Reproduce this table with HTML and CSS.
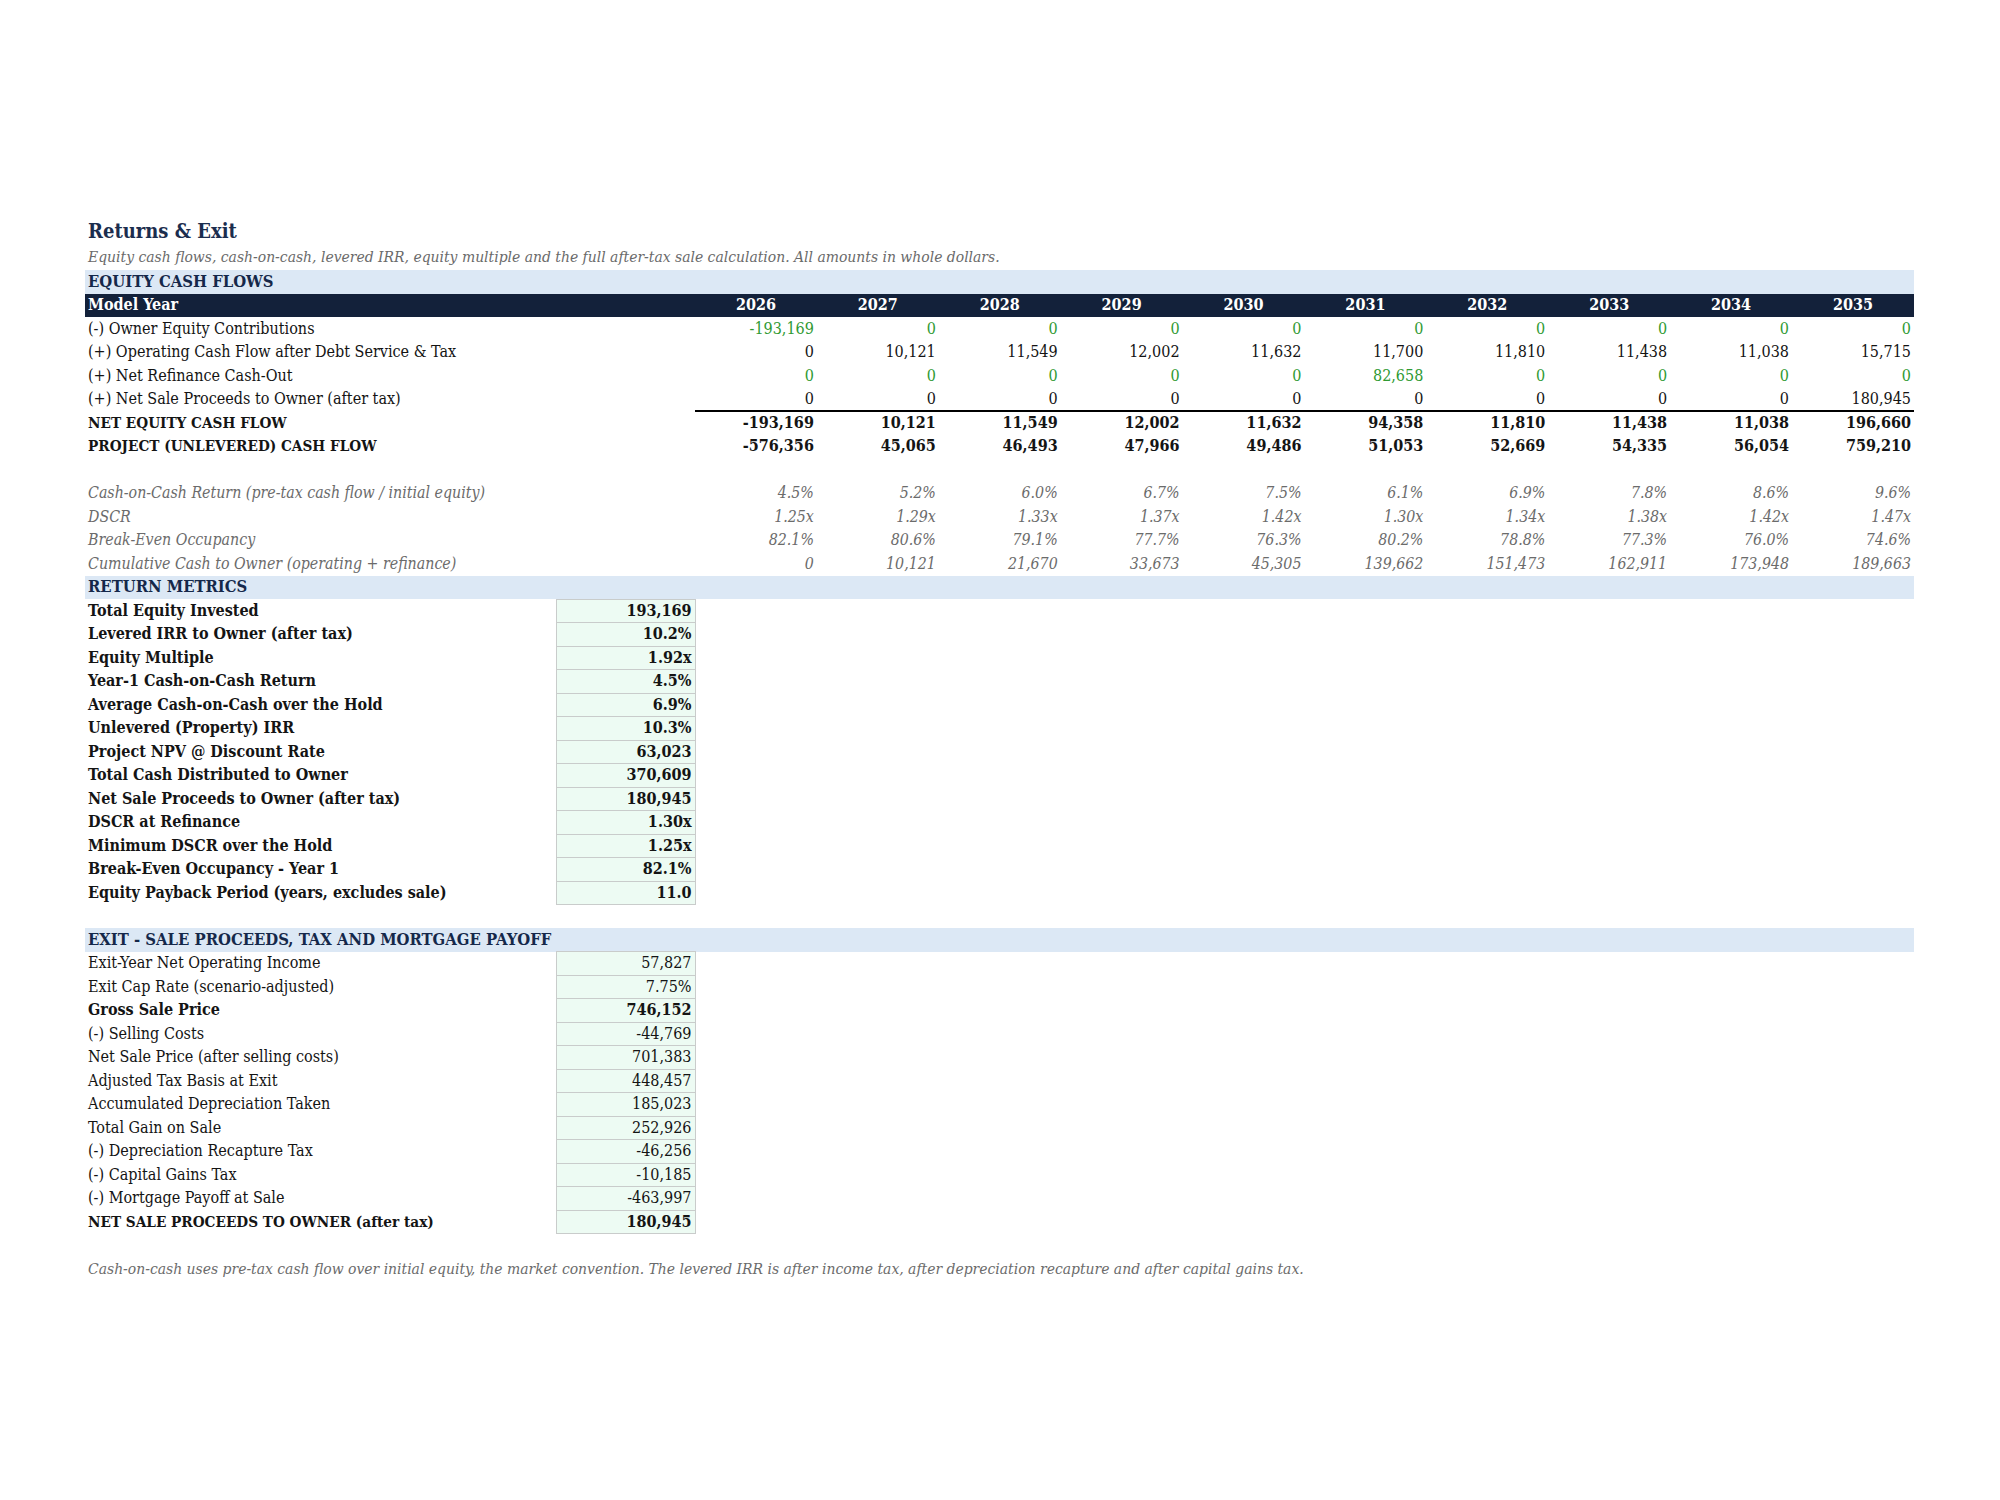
FILE: index.html
```html
<!DOCTYPE html>
<html lang="en">
<head>
<meta charset="utf-8">
<title>Returns &amp; Exit</title>
<link rel="stylesheet" href="styles.css">
</head>
<body>
<div class="sheet">
  <div class="title">Returns &amp; Exit</div>
  <div class="subtitle">Equity cash flows, cash-on-cash, levered IRR, equity multiple and the full after-tax sale calculation. All amounts in whole dollars.</div>
  <table class="grid">
    <colgroup>
      <col class="c-label"><col class="c-val">
      <col class="c-yr"><col class="c-yr"><col class="c-yr"><col class="c-yr"><col class="c-yr">
      <col class="c-yr"><col class="c-yr"><col class="c-yr"><col class="c-yr"><col class="c-yr">
    </colgroup>
    <tbody>
      <tr class="band"><td colspan="12">EQUITY CASH FLOWS</td></tr>
      <tr class="head"><td colspan="2">Model Year</td><td>2026</td><td>2027</td><td>2028</td><td>2029</td><td>2030</td><td>2031</td><td>2032</td><td>2033</td><td>2034</td><td>2035</td></tr>
      <tr class="row"><td colspan="2" class="lbl">(-) Owner Equity Contributions</td><td class="num green">-193,169</td><td class="num green">0</td><td class="num green">0</td><td class="num green">0</td><td class="num green">0</td><td class="num green">0</td><td class="num green">0</td><td class="num green">0</td><td class="num green">0</td><td class="num green">0</td></tr>
      <tr class="row"><td colspan="2" class="lbl">(+) Operating Cash Flow after Debt Service &amp; Tax</td><td class="num">0</td><td class="num">10,121</td><td class="num">11,549</td><td class="num">12,002</td><td class="num">11,632</td><td class="num">11,700</td><td class="num">11,810</td><td class="num">11,438</td><td class="num">11,038</td><td class="num">15,715</td></tr>
      <tr class="row"><td colspan="2" class="lbl">(+) Net Refinance Cash-Out</td><td class="num green">0</td><td class="num green">0</td><td class="num green">0</td><td class="num green">0</td><td class="num green">0</td><td class="num green">82,658</td><td class="num green">0</td><td class="num green">0</td><td class="num green">0</td><td class="num green">0</td></tr>
      <tr class="row"><td colspan="2" class="lbl">(+) Net Sale Proceeds to Owner (after tax)</td><td class="num">0</td><td class="num">0</td><td class="num">0</td><td class="num">0</td><td class="num">0</td><td class="num">0</td><td class="num">0</td><td class="num">0</td><td class="num">0</td><td class="num">180,945</td></tr>
      <tr class="row bold total"><td colspan="2" class="lbl caps">NET EQUITY CASH FLOW</td><td class="num">-193,169</td><td class="num">10,121</td><td class="num">11,549</td><td class="num">12,002</td><td class="num">11,632</td><td class="num">94,358</td><td class="num">11,810</td><td class="num">11,438</td><td class="num">11,038</td><td class="num">196,660</td></tr>
      <tr class="row bold"><td colspan="2" class="lbl caps">PROJECT (UNLEVERED) CASH FLOW</td><td class="num">-576,356</td><td class="num">45,065</td><td class="num">46,493</td><td class="num">47,966</td><td class="num">49,486</td><td class="num">51,053</td><td class="num">52,669</td><td class="num">54,335</td><td class="num">56,054</td><td class="num">759,210</td></tr>
      <tr class="row"><td colspan="12"></td></tr>
      <tr class="row ital"><td colspan="2" class="lbl">Cash-on-Cash Return (pre-tax cash flow / initial equity)</td><td class="num">4.5%</td><td class="num">5.2%</td><td class="num">6.0%</td><td class="num">6.7%</td><td class="num">7.5%</td><td class="num">6.1%</td><td class="num">6.9%</td><td class="num">7.8%</td><td class="num">8.6%</td><td class="num">9.6%</td></tr>
      <tr class="row ital"><td colspan="2" class="lbl">DSCR</td><td class="num">1.25x</td><td class="num">1.29x</td><td class="num">1.33x</td><td class="num">1.37x</td><td class="num">1.42x</td><td class="num">1.30x</td><td class="num">1.34x</td><td class="num">1.38x</td><td class="num">1.42x</td><td class="num">1.47x</td></tr>
      <tr class="row ital"><td colspan="2" class="lbl">Break-Even Occupancy</td><td class="num">82.1%</td><td class="num">80.6%</td><td class="num">79.1%</td><td class="num">77.7%</td><td class="num">76.3%</td><td class="num">80.2%</td><td class="num">78.8%</td><td class="num">77.3%</td><td class="num">76.0%</td><td class="num">74.6%</td></tr>
      <tr class="row ital"><td colspan="2" class="lbl">Cumulative Cash to Owner (operating + refinance)</td><td class="num">0</td><td class="num">10,121</td><td class="num">21,670</td><td class="num">33,673</td><td class="num">45,305</td><td class="num">139,662</td><td class="num">151,473</td><td class="num">162,911</td><td class="num">173,948</td><td class="num">189,663</td></tr>
      <tr class="band"><td colspan="12">RETURN METRICS</td></tr>
      <tr class="row bold"><td class="lbl">Total Equity Invested</td><td class="box">193,169</td><td colspan="10"></td></tr>
      <tr class="row bold"><td class="lbl">Levered IRR to Owner (after tax)</td><td class="box">10.2%</td><td colspan="10"></td></tr>
      <tr class="row bold"><td class="lbl">Equity Multiple</td><td class="box">1.92x</td><td colspan="10"></td></tr>
      <tr class="row bold"><td class="lbl">Year-1 Cash-on-Cash Return</td><td class="box">4.5%</td><td colspan="10"></td></tr>
      <tr class="row bold"><td class="lbl">Average Cash-on-Cash over the Hold</td><td class="box">6.9%</td><td colspan="10"></td></tr>
      <tr class="row bold"><td class="lbl">Unlevered (Property) IRR</td><td class="box">10.3%</td><td colspan="10"></td></tr>
      <tr class="row bold"><td class="lbl">Project NPV @ Discount Rate</td><td class="box">63,023</td><td colspan="10"></td></tr>
      <tr class="row bold"><td class="lbl">Total Cash Distributed to Owner</td><td class="box">370,609</td><td colspan="10"></td></tr>
      <tr class="row bold"><td class="lbl">Net Sale Proceeds to Owner (after tax)</td><td class="box">180,945</td><td colspan="10"></td></tr>
      <tr class="row bold"><td class="lbl">DSCR at Refinance</td><td class="box">1.30x</td><td colspan="10"></td></tr>
      <tr class="row bold"><td class="lbl">Minimum DSCR over the Hold</td><td class="box">1.25x</td><td colspan="10"></td></tr>
      <tr class="row bold"><td class="lbl">Break-Even Occupancy - Year 1</td><td class="box">82.1%</td><td colspan="10"></td></tr>
      <tr class="row bold"><td class="lbl">Equity Payback Period (years, excludes sale)</td><td class="box">11.0</td><td colspan="10"></td></tr>
      <tr class="row"><td colspan="12"></td></tr>
      <tr class="band"><td colspan="12">EXIT - SALE PROCEEDS, TAX AND MORTGAGE PAYOFF</td></tr>
      <tr class="row"><td class="lbl">Exit-Year Net Operating Income</td><td class="box">57,827</td><td colspan="10"></td></tr>
      <tr class="row"><td class="lbl">Exit Cap Rate (scenario-adjusted)</td><td class="box">7.75%</td><td colspan="10"></td></tr>
      <tr class="row bold"><td class="lbl">Gross Sale Price</td><td class="box">746,152</td><td colspan="10"></td></tr>
      <tr class="row"><td class="lbl">(-) Selling Costs</td><td class="box">-44,769</td><td colspan="10"></td></tr>
      <tr class="row"><td class="lbl">Net Sale Price (after selling costs)</td><td class="box">701,383</td><td colspan="10"></td></tr>
      <tr class="row"><td class="lbl">Adjusted Tax Basis at Exit</td><td class="box">448,457</td><td colspan="10"></td></tr>
      <tr class="row"><td class="lbl">Accumulated Depreciation Taken</td><td class="box">185,023</td><td colspan="10"></td></tr>
      <tr class="row"><td class="lbl">Total Gain on Sale</td><td class="box">252,926</td><td colspan="10"></td></tr>
      <tr class="row"><td class="lbl">(-) Depreciation Recapture Tax</td><td class="box">-46,256</td><td colspan="10"></td></tr>
      <tr class="row"><td class="lbl">(-) Capital Gains Tax</td><td class="box">-10,185</td><td colspan="10"></td></tr>
      <tr class="row"><td class="lbl">(-) Mortgage Payoff at Sale</td><td class="box">-463,997</td><td colspan="10"></td></tr>
      <tr class="row bold"><td class="lbl caps">NET SALE PROCEEDS TO OWNER (after tax)</td><td class="box">180,945</td><td colspan="10"></td></tr>
      <tr class="row"><td colspan="12"></td></tr>
      <tr class="row ital note"><td colspan="12" class="lbl">Cash-on-cash uses pre-tax cash flow over initial equity, the market convention. The levered IRR is after income tax, after depreciation recapture and after capital gains tax.</td></tr>
    </tbody>
  </table>
</div>
</body>
</html>
```

FILE: styles.css
```css
html, body {
  margin: 0;
  padding: 0;
  background: #ffffff;
}

body {
  font-family: "DejaVu Serif Condensed", "DejaVu Serif", "Liberation Serif", serif;
  font-size: 16px;
  color: #141414;
}

.sheet {
  padding: 218px 0 0 85px;
}

.title {
  height: 27px;
  line-height: 27px;
  padding-left: 3px;
  font-size: 20px;
  font-weight: bold;
  color: #1b2d4e;
}

.subtitle {
  height: 25px;
  line-height: 25px;
  padding-left: 3px;
  font-size: 15.5px;
  font-style: italic;
  color: #6a6a6a;
  white-space: nowrap;
}

.grid {
  border-collapse: collapse;
  table-layout: fixed;
  width: 1829px;
}

.c-label { width: 471px; }
.c-val { width: 139px; }
.c-yr { width: 121.9px; }

.grid td {
  padding: 0 3px;
  line-height: 20px;
  vertical-align: middle;
  white-space: nowrap;
  overflow: visible;
}

.grid tr {
  height: 23.5px;
}

.band td {
  background: #dce8f5;
  color: #15284a;
  font-weight: bold;
  font-size: 16.5px;
}

.head td {
  background: #13213a;
  color: #ffffff;
  font-weight: bold;
  text-align: center;
}

.head td:first-child {
  text-align: left;
}

.num {
  text-align: right;
}

.green {
  color: #2f9a33;
}

.bold td {
  font-weight: bold;
}

.bold td.caps {
  font-size: 15.2px;
}

.total td.num {
  border-top: 2px solid #000000;
}

.ital td {
  font-style: italic;
  color: #6b6b6b;
  font-size: 15.8px;
}

.box {
  text-align: right;
  background: #edfbf3;
  border: 1px solid #c9cccb;
}

.note td {
  font-size: 15.5px;
}
```
